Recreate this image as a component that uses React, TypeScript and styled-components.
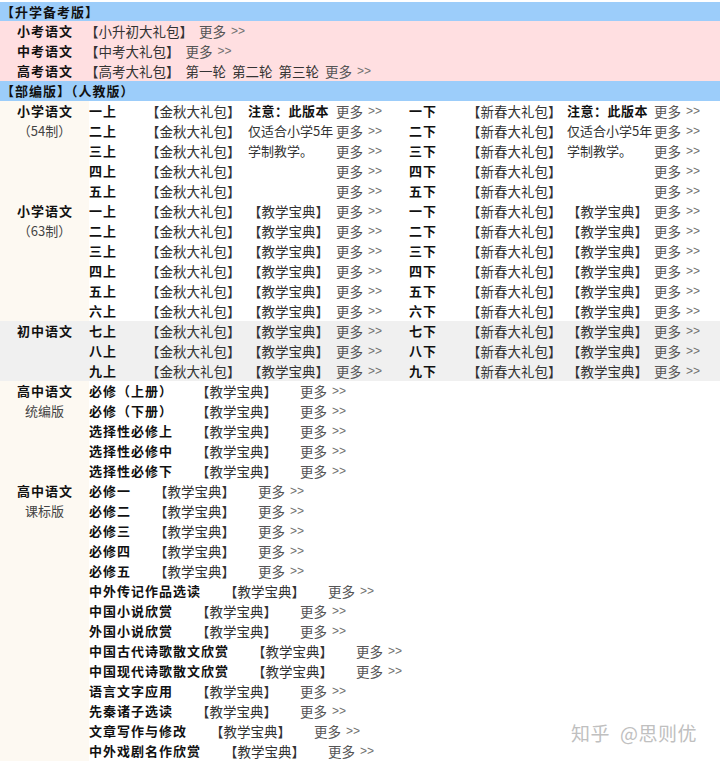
import React from 'react';
import styled, { createGlobalStyle } from 'styled-components';

const Global = createGlobalStyle`
  html, body { margin: 0; padding: 0; background: #ffffff; }
  body {
    font-family: "Noto Sans CJK SC", "Noto Sans", sans-serif;
    font-size: 13.5px;
    color: #333;
  }
`;

const Page = styled.div`
  position: relative;
  width: 720px;
  height: 763px;
  overflow: hidden;
  padding-top: 2px;
  box-sizing: border-box;
`;

const SectionBar = styled.div<{ $h: number }>`
  height: ${(p) => p.$h}px;
  line-height: ${(p) => p.$h}px;
  background: #9ccdfa;
  font-size: 13px;
  font-weight: 700;
  letter-spacing: 1px;
  color: #111;
  padding-left: 1px;
  white-space: nowrap;
`;

const PinkBlock = styled.div`
  background: #ffdfe1;
`;

const PinkRow = styled.div`
  display: flex;
  height: 20px;
  line-height: 20px;
  white-space: nowrap;
`;

const PinkLabel = styled.div`
  width: 85px;
  padding-left: 17px;
  box-sizing: border-box;
  font-size: 13px;
  font-weight: 700;
  letter-spacing: 1px;
  color: #111;
`;

const Inline = styled.div`
  display: flex;
  column-gap: 6px;
`;

const Pkg = styled.span`
  color: #333;
`;

const MoreWrap = styled.span`
  color: #555;
  display: inline-flex;
  align-items: center;
  gap: 5px;
`;

const Arrow = styled.span`
  font-family: "Liberation Sans", Arial, sans-serif;
  font-size: 12px;
  color: #707070;
`;

const More = () => (
  <MoreWrap>
    更多<Arrow>&gt;&gt;</Arrow>
  </MoreWrap>
);

const Group = styled.div<{ $shade?: boolean }>`
  display: grid;
  grid-template-columns: 89px 1fr;
  background: ${(p) => (p.$shade ? '#f0f0f0' : '#ffffff')};
`;

const GroupLabel = styled.div<{ $shade?: boolean }>`
  background: ${(p) => (p.$shade ? '#f0f0f0' : '#fdf9f2')};
  text-align: center;
  line-height: 20px;
`;

const LabelMain = styled.div`
  font-size: 13px;
  font-weight: 700;
  letter-spacing: 1px;
  color: #111;
  padding-left: 1px;
`;

const LabelSub = styled.div`
  font-size: 13px;
  color: #444;
`;

const Rows = styled.div``;

const GridRow = styled.div`
  display: grid;
  grid-template-columns: 57px 102px 88px 73px 58px 100px 87px 1fr;
  height: 20px;
  line-height: 20px;
  white-space: nowrap;
`;

const Grade = styled.span`
  font-size: 13px;
  font-weight: 700;
  letter-spacing: 1px;
  color: #111;
`;

const Note = styled.span<{ $strong?: boolean }>`
  font-size: ${(p) => (p.$strong ? '13px' : '13px')};
  font-weight: ${(p) => (p.$strong ? 700 : 400)};
  letter-spacing: ${(p) => (p.$strong ? '0.5px' : '0')};
  color: ${(p) => (p.$strong ? '#111' : '#333')};
`;

const FlowRow = styled.div`
  display: flex;
  height: 20px;
  line-height: 20px;
  white-space: nowrap;
`;

const Title = styled.span`
  font-size: 13px;
  font-weight: 700;
  letter-spacing: 1px;
  color: #111;
  margin-right: 23px;
`;

const FlowPkg = styled.span`
  color: #333;
  margin-right: 23px;
`;

const Watermark = styled.div`
  position: absolute;
  right: 19px;
  bottom: 17px;
  font-size: 19px;
  color: #c0c0c0;
  letter-spacing: 0.5px;
  padding: 0 4px;
  background: rgba(255, 255, 255, 0.6);
  text-shadow: 0 0 1px rgba(255, 255, 255, 0.9);
  white-space: nowrap;
`;

const WmGap = styled.span`
  display: inline-block;
  width: 10px;
`;

type Row54 = { a: string; b: string; noteA?: string; noteB?: string; strong?: boolean };

const rows54: Row54[] = [
  { a: '一上', b: '一下', noteA: '注意：此版本', noteB: '注意：此版本', strong: true },
  { a: '二上', b: '二下', noteA: '仅适合小学5年', noteB: '仅适合小学5年' },
  { a: '三上', b: '三下', noteA: '学制教学。', noteB: '学制教学。' },
  { a: '四上', b: '四下' },
  { a: '五上', b: '五下' },
];

const rows63 = [
  ['一上', '一下'],
  ['二上', '二下'],
  ['三上', '三下'],
  ['四上', '四下'],
  ['五上', '五下'],
  ['六上', '六下'],
];

const rowsMid = [
  ['七上', '七下'],
  ['八上', '八下'],
  ['九上', '九下'],
];

const tongbian = ['必修（上册）', '必修（下册）', '选择性必修上', '选择性必修中', '选择性必修下'];

const kebiao = [
  '必修一',
  '必修二',
  '必修三',
  '必修四',
  '必修五',
  '中外传记作品选读',
  '中国小说欣赏',
  '外国小说欣赏',
  '中国古代诗歌散文欣赏',
  '中国现代诗歌散文欣赏',
  '语言文字应用',
  '先秦诸子选读',
  '文章写作与修改',
  '中外戏剧名作欣赏',
];

const DualRow = ({ a, b, noteA, noteB, strong, withBook }: { a: string; b: string; noteA?: string; noteB?: string; strong?: boolean; withBook?: boolean }) => (
  <GridRow>
    <Grade>{a}</Grade>
    <Pkg>【金秋大礼包】</Pkg>
    {withBook ? <Pkg>【教学宝典】</Pkg> : <Note $strong={strong}>{noteA ?? ''}</Note>}
    <More />
    <Grade>{b}</Grade>
    <Pkg>【新春大礼包】</Pkg>
    {withBook ? <Pkg>【教学宝典】</Pkg> : <Note $strong={strong}>{noteB ?? ''}</Note>}
    <More />
  </GridRow>
);

export default function App() {
  return (
    <Page>
      <Global />
      <SectionBar $h={19}>【升学备考版】</SectionBar>
      <PinkBlock>
        <PinkRow>
          <PinkLabel>小考语文</PinkLabel>
          <Inline>
            <Pkg>【小升初大礼包】</Pkg>
            <More />
          </Inline>
        </PinkRow>
        <PinkRow>
          <PinkLabel>中考语文</PinkLabel>
          <Inline>
            <Pkg>【中考大礼包】</Pkg>
            <More />
          </Inline>
        </PinkRow>
        <PinkRow>
          <PinkLabel>高考语文</PinkLabel>
          <Inline>
            <Pkg>【高考大礼包】</Pkg>
            <Pkg>第一轮</Pkg>
            <Pkg>第二轮</Pkg>
            <Pkg>第三轮</Pkg>
            <More />
          </Inline>
        </PinkRow>
      </PinkBlock>
      <SectionBar $h={20}>【部编版】（人教版）</SectionBar>

      <Group>
        <GroupLabel>
          <LabelMain>小学语文</LabelMain>
          <LabelSub>（54制）</LabelSub>
        </GroupLabel>
        <Rows>
          {rows54.map((r) => (
            <DualRow key={r.a} {...r} />
          ))}
        </Rows>
      </Group>

      <Group>
        <GroupLabel>
          <LabelMain>小学语文</LabelMain>
          <LabelSub>（63制）</LabelSub>
        </GroupLabel>
        <Rows>
          {rows63.map(([a, b]) => (
            <DualRow key={a} a={a} b={b} withBook />
          ))}
        </Rows>
      </Group>

      <Group $shade>
        <GroupLabel $shade>
          <LabelMain>初中语文</LabelMain>
        </GroupLabel>
        <Rows>
          {rowsMid.map(([a, b]) => (
            <DualRow key={a} a={a} b={b} withBook />
          ))}
        </Rows>
      </Group>

      <Group>
        <GroupLabel>
          <LabelMain>高中语文</LabelMain>
          <LabelSub>统编版</LabelSub>
        </GroupLabel>
        <Rows>
          {tongbian.map((t) => (
            <FlowRow key={t}>
              <Title>{t}</Title>
              <FlowPkg>【教学宝典】</FlowPkg>
              <More />
            </FlowRow>
          ))}
        </Rows>
      </Group>

      <Group>
        <GroupLabel>
          <LabelMain>高中语文</LabelMain>
          <LabelSub>课标版</LabelSub>
        </GroupLabel>
        <Rows>
          {kebiao.map((t) => (
            <FlowRow key={t}>
              <Title>{t}</Title>
              <FlowPkg>【教学宝典】</FlowPkg>
              <More />
            </FlowRow>
          ))}
        </Rows>
      </Group>

      <Watermark>
        知乎<WmGap />@思则优
      </Watermark>
    </Page>
  );
}
